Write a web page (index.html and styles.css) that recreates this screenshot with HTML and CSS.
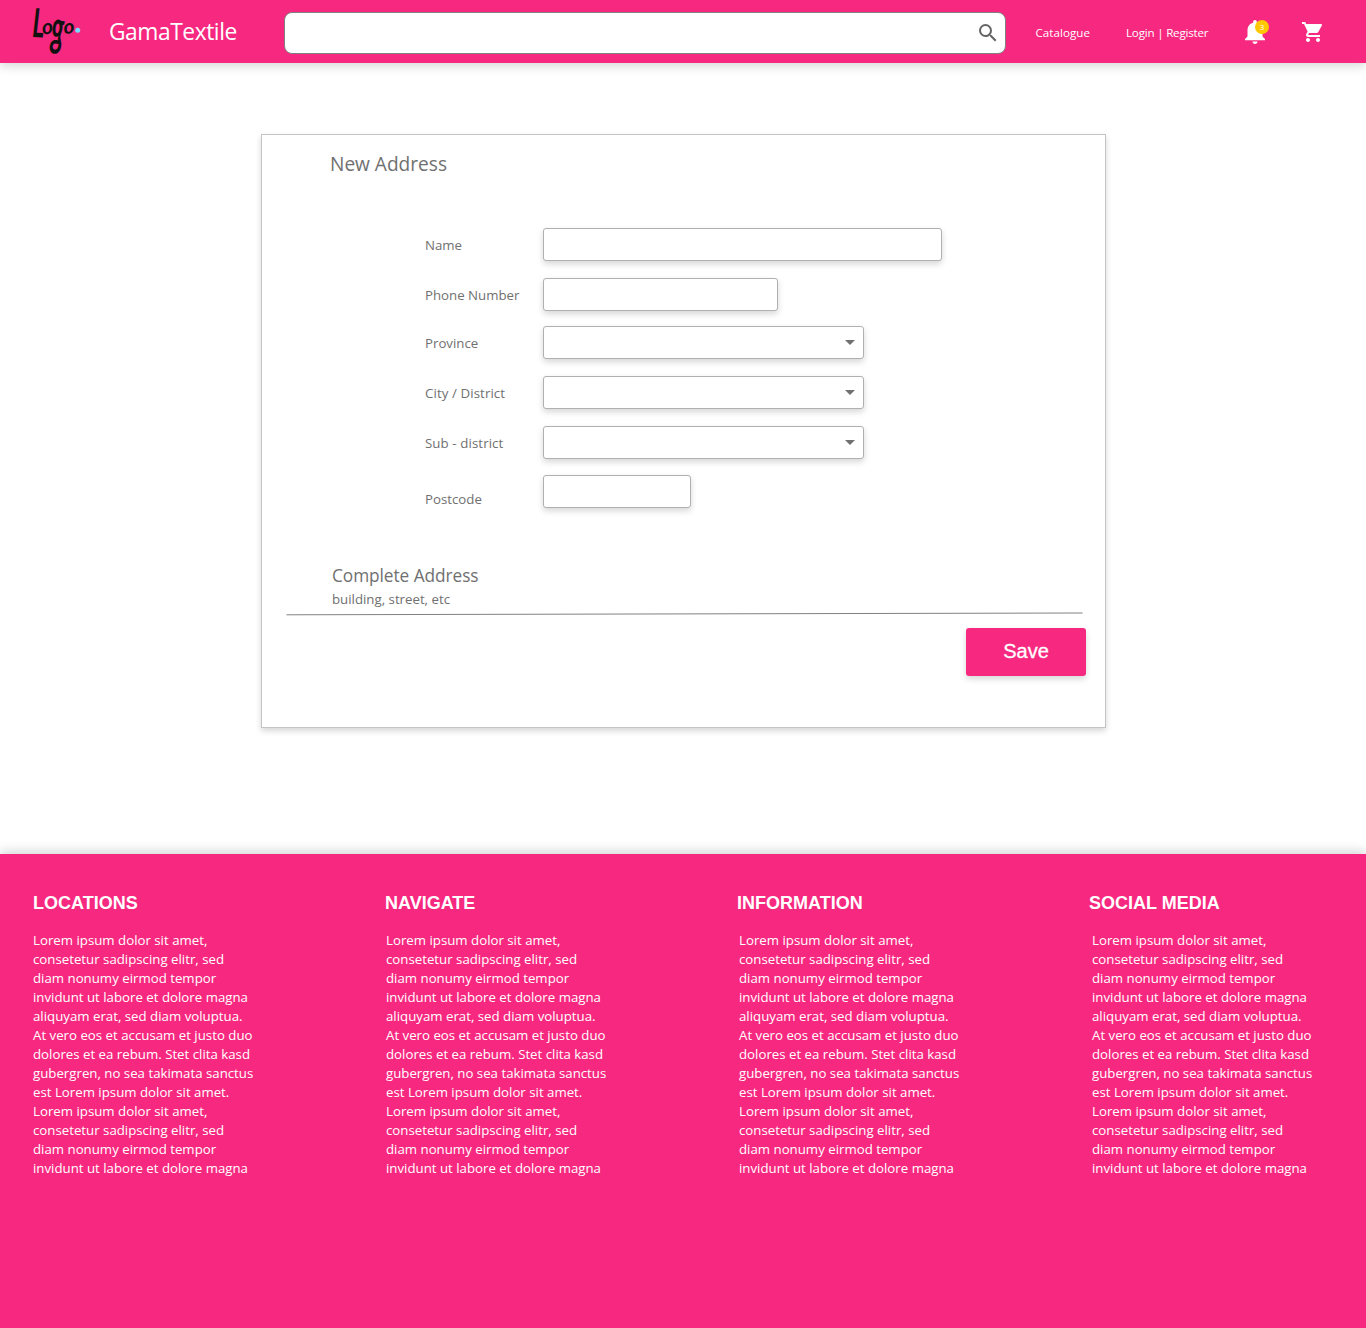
FILE: index.html
```
<!DOCTYPE html>
<html lang="en">
<head>
<meta charset="utf-8">
<title>GamaTextile - New Address</title>
<link rel="stylesheet" href="styles.css">
</head>
<body>
<header class="topbar">
  <svg class="logo" width="50" height="56" viewBox="0 0 50 56" role="img" aria-label="Logo">
    <g class="logo-letters">
      <text transform="translate(0 33) rotate(2) scale(.62 1)" font-size="40">L</text>
      <text transform="translate(10.500 30.500) rotate(-5) scale(1 1)" font-size="21">o</text>
      <text transform="translate(18.500 40.800) rotate(3) scale(1.050 2.050)" font-size="24">g</text>
      <text transform="translate(32 30) rotate(-5) scale(1.050 1)" font-size="20">o</text>
    </g>
    <circle class="logo-dot" cx="45.700" cy="26.200" r="2.500"/>
  </svg>
  <span class="brand">GamaTextile</span>
  <div class="search">
    <svg width="24" height="24" viewBox="0 0 24 24"><path d="M15.5 14h-.79l-.28-.27A6.471 6.471 0 0 0 16 9.500 6.500 6.500 0 1 0 9.500 16c1.610 0 3.090-.59 4.230-1.570l.27.28v.79l5 4.990L20.490 19l-4.990-5zm-6 0C7.010 14 5 11.990 5 9.500S7.010 5 9.500 5 14 7.010 14 9.500 11.990 14 9.500 14z"/></svg>
  </div>
  <a class="nav-link nav-catalogue">Catalogue</a>
  <a class="nav-link nav-login">Login | Register</a>
  <div class="bell">
    <svg width="20" height="24" viewBox="4 2.500 16 19.500" preserveAspectRatio="none"><path d="M12 22c1.100 0 2-.9 2-2h-4c0 1.100.89 2 2 2zm6-6v-5c0-3.070-1.640-5.640-4.500-6.320V4c0-.83-.67-1.500-1.500-1.500s-1.500.67-1.500 1.500v.68C7.630 5.360 6 7.920 6 11v5l-2 2v1h16v-1l-2-2z"/></svg>
    <span class="badge">3</span>
  </div>
  <svg class="cart" width="24" height="24" viewBox="0 0 24 24"><path d="M7 18c-1.100 0-1.990.9-1.990 2S5.900 22 7 22s2-.9 2-2-.9-2-2-2zM1 2v2h2l3.600 7.590-1.350 2.450c-.16.28-.25.61-.25.96 0 1.100.9 2 2 2h12v-2H7.420c-.14 0-.25-.11-.25-.25l.03-.12.9-1.630h7.450c.75 0 1.410-.41 1.750-1.030l3.580-6.490c.08-.14.12-.31.12-.48 0-.55-.45-1-1-1H5.210l-.94-2H1zm16 16c-1.100 0-1.990.9-1.990 2s.89 2 1.990 2 2-.9 2-2-.9-2-2-2z"/></svg>
</header>

<main class="page">
  <section class="card">
    <h1 class="card-title">New Address</h1>
    <div class="fields">
      <div class="row"><span class="label">Name</span><div class="field field-name"></div></div>
      <div class="row"><span class="label">Phone Number</span><div class="field field-phone"></div></div>
      <div class="row"><span class="label">Province</span><div class="field field-select"><i class="caret"></i></div></div>
      <div class="row"><span class="label label-wide">City / District</span><div class="field field-select"><i class="caret"></i></div></div>
      <div class="row"><span class="label label-wide">Sub - district</span><div class="field field-select"><i class="caret"></i></div></div>
      <div class="row"><span class="label label-low">Postcode</span><div class="field field-postcode"></div></div>
    </div>
    <div class="complete">
      <h2 class="complete-title">Complete Address</h2>
      <p class="complete-hint">building, street, etc</p>
    </div>
    <svg class="rule" width="797" height="4" viewBox="0 0 797 4"><path d="M.5 2.800L796.500 1"/></svg>
    <button class="save">Save</button>
  </section>
</main>

<footer class="footer">
  <div class="heads">
    <h3>LOCATIONS</h3><h3>NAVIGATE</h3><h3>INFORMATION</h3><h3>SOCIAL MEDIA</h3>
  </div>
  <div class="texts">
    <p>Lorem ipsum dolor sit amet,<br>consetetur sadipscing elitr, sed<br>diam nonumy eirmod tempor<br>invidunt ut labore et dolore magna<br>aliquyam erat, sed diam voluptua.<br>At vero eos et accusam et justo duo<br>dolores et ea rebum. Stet clita kasd<br>gubergren, no sea takimata sanctus<br>est Lorem ipsum dolor sit amet.<br>Lorem ipsum dolor sit amet,<br>consetetur sadipscing elitr, sed<br>diam nonumy eirmod tempor<br>invidunt ut labore et dolore magna</p>
    <p>Lorem ipsum dolor sit amet,<br>consetetur sadipscing elitr, sed<br>diam nonumy eirmod tempor<br>invidunt ut labore et dolore magna<br>aliquyam erat, sed diam voluptua.<br>At vero eos et accusam et justo duo<br>dolores et ea rebum. Stet clita kasd<br>gubergren, no sea takimata sanctus<br>est Lorem ipsum dolor sit amet.<br>Lorem ipsum dolor sit amet,<br>consetetur sadipscing elitr, sed<br>diam nonumy eirmod tempor<br>invidunt ut labore et dolore magna</p>
    <p>Lorem ipsum dolor sit amet,<br>consetetur sadipscing elitr, sed<br>diam nonumy eirmod tempor<br>invidunt ut labore et dolore magna<br>aliquyam erat, sed diam voluptua.<br>At vero eos et accusam et justo duo<br>dolores et ea rebum. Stet clita kasd<br>gubergren, no sea takimata sanctus<br>est Lorem ipsum dolor sit amet.<br>Lorem ipsum dolor sit amet,<br>consetetur sadipscing elitr, sed<br>diam nonumy eirmod tempor<br>invidunt ut labore et dolore magna</p>
    <p>Lorem ipsum dolor sit amet,<br>consetetur sadipscing elitr, sed<br>diam nonumy eirmod tempor<br>invidunt ut labore et dolore magna<br>aliquyam erat, sed diam voluptua.<br>At vero eos et accusam et justo duo<br>dolores et ea rebum. Stet clita kasd<br>gubergren, no sea takimata sanctus<br>est Lorem ipsum dolor sit amet.<br>Lorem ipsum dolor sit amet,<br>consetetur sadipscing elitr, sed<br>diam nonumy eirmod tempor<br>invidunt ut labore et dolore magna</p>
  </div>
</footer>
</body>
</html>
```
FILE: styles.css
```
* { box-sizing: border-box; }

body {
  margin: 0;
  background: #fff;
  color: #707070;
  font-family: "Segoe UI", "Open Sans", "Noto Sans", sans-serif;
  font-size: 13.25px;
}

h1, h2, h3, p { margin: 0; font-weight: 400; }
svg { display: block; flex: none; }

/* Top bar */
.topbar {
  display: flex;
  align-items: center;
  height: 63px;
  padding-left: 32px;
  background: #f7287f;
  color: #fff;
  box-shadow: 0 3px 10px rgba(0, 0, 0, .16);
}
.logo { margin-top: 1px; overflow: visible; }
.logo-letters {
  fill: #111;
  font-family: Lato, sans-serif;
  font-style: italic;
  font-weight: 700;
}
.logo-dot { fill: #7bdcff; }
.brand {
  flex: none;
  width: 175px;
  margin-left: 27px;
  font-size: 22.8px;
  letter-spacing: -.45px;
  line-height: 32px;
}
.search {
  display: flex;
  flex: none;
  align-items: center;
  justify-content: flex-end;
  width: 721.5px;
  height: 42px;
  margin-top: 2px;
  padding-right: 5px;
  background: #fff;
  border: 1px solid #808080;
  border-radius: 8px;
  fill: #656565;
}
.nav-link {
  flex: none;
  margin-top: 2px;
  font-size: 11.6px;
  line-height: 18px;
}
.nav-catalogue { width: 90.5px; margin-left: 30px; letter-spacing: .05px; }
.nav-login { width: 119px; letter-spacing: -.2px; }
.bell {
  position: relative;
  flex: none;
  width: 20px;
  height: 24px;
  fill: #fff;
}
.badge {
  position: absolute;
  top: 0;
  left: 10px;
  width: 14px;
  height: 14px;
  border-radius: 50%;
  background: #ffc800;
  font-size: 8px;
  line-height: 13px;
  text-align: center;
}
.cart { margin: 1px 0 0 36px; fill: #fff; }

/* Address card */
.page { height: 791px; padding: 71px 0 0 261px; }
.card {
  width: 845px;
  height: 594px;
  border: 1px solid #c4c4c4;
  box-shadow: 0 3px 6px rgba(0, 0, 0, .16);
}
.card-title {
  margin: 15px 0 0 68px;
  font-size: 19.1px;
  line-height: 28px;
}
.fields {
  display: grid;
  grid-template-rows: 50px 48px 50px 50px 49px 33px;
  margin: 50px 0 0 163px;
}
.row { display: flex; height: 33px; }
.label { width: 117.5px; line-height: 34px; }
.label-wide { letter-spacing: .1px; }
.label-low { padding-top: 7px; }
.field {
  display: flex;
  align-items: center;
  justify-content: flex-end;
  height: 33px;
  background: #fff;
  border: 1px solid #b0b0b0;
  border-radius: 3px;
  box-shadow: 0 3px 6px rgba(0, 0, 0, .16);
}
.field-name { width: 399.5px; }
.field-phone { width: 235.5px; }
.field-select { width: 321.5px; padding-right: 8px; }
.field-postcode { width: 148.5px; }
.caret {
  border: 5px solid transparent;
  border-top-color: #707070;
  border-bottom: 0;
}
.complete { margin: 54.5px 0 0 70px; }
.complete-title { font-size: 17.3px; letter-spacing: -.07px; line-height: 26px; }
.complete-hint { line-height: 20px; }
.rule { margin: 3px 0 0 24px; stroke: #808080; }
.save {
  display: block;
  width: 120px;
  height: 48px;
  margin: 12.5px 0 0 704px;
  padding: 0 0 1px;
  border: 0;
  border-radius: 3px;
  background: #f7287f;
  color: #fff;
  font: 20px "Liberation Sans", Arial, sans-serif;
  -webkit-text-stroke: .3px #fff;
  box-shadow: 0 3px 6px rgba(0, 0, 0, .16);
}

/* Footer */
.footer {
  height: 474px;
  padding: 38px 0 0 33px;
  background: #f7287f;
  color: #fff;
  box-shadow: 0 -3px 10px rgba(0, 0, 0, .16);
}
.heads { display: grid; grid-template-columns: repeat(3, 352px) 1fr; }
.heads h3 {
  font: bold 18px/22px "Liberation Sans", Arial, sans-serif;
}
.texts {
  display: grid;
  grid-template-columns: repeat(3, 353px) 1fr;
  margin-top: 17px;
  line-height: 19px;
}
```
